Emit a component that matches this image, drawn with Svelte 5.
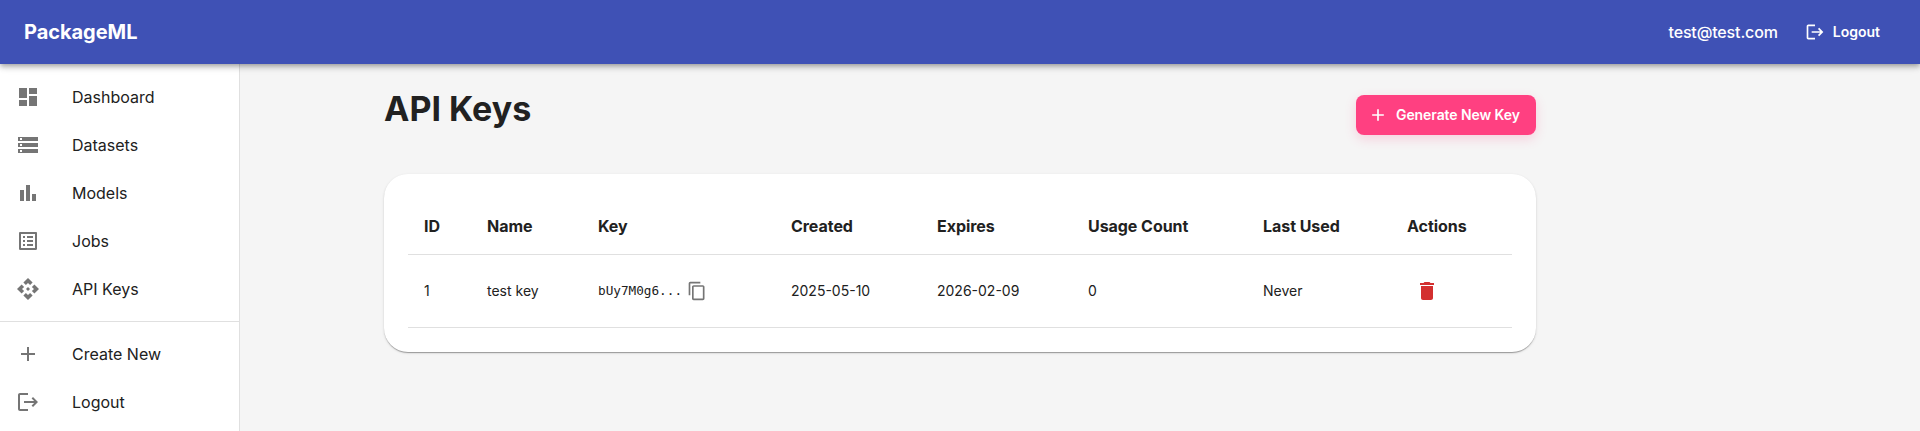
<script>
  const icons = {
    dashboard: 'M3 13h8V3H3zm0 8h8v-6H3zm10 0h8V11h-8zm0-18v6h8V3z',
    storage: 'M2 20h20v-4H2zm2-3h2v2H4zM2 4v4h20V4zm4 3H4V5h2zm-4 7h20v-4H2zm2-3h2v2H4z',
    chart: 'M4 9h4v11H4zm12 4h4v7h-4zm-6-9h4v16h-4z',
    list: 'M19 5v14H5V5zm1.1-2H3.9c-.5 0-.9.4-.9.9v16.2c0 .4.4.9.9.9h16.2c.4 0 .9-.5.9-.9V3.9c0-.5-.5-.9-.9-.9M11 7h6v2h-6zm0 4h6v2h-6zm0 4h6v2h-6zM7 7h2v2H7zm0 4h2v2H7zm0 4h2v2H7z',
    api: 'm14 12-2 2-2-2 2-2zm-2-6 2.12 2.12 2.5-2.5L12 1 7.38 5.62l2.5 2.5zm-6 6 2.12-2.12-2.5-2.5L1 12l4.62 4.62 2.5-2.5zm12 0-2.12 2.12 2.5 2.5L23 12l-4.62-4.62-2.5 2.5zm-6 6-2.12-2.12-2.5 2.5L12 23l4.62-4.62-2.5-2.5z',
    add: 'M19 13h-6v6h-2v-6H5v-2h6V5h2v6h6z',
    logout: 'm17 7-1.41 1.41L18.17 11H8v2h10.17l-2.58 2.58L17 17l5-5zM4 5h8V3H4c-1.1 0-2 .9-2 2v14c0 1.1.9 2 2 2h8v-2H4z',
    copy: 'M16 1H4c-1.1 0-2 .9-2 2v14h2V3h12zm3 4H8c-1.1 0-2 .9-2 2v14c0 1.1.9 2 2 2h11c1.1 0 2-.9 2-2V7c0-1.1-.9-2-2-2m0 16H8V7h11z',
    trash: 'M6 19c0 1.1.9 2 2 2h8c1.1 0 2-.9 2-2V7H6zM19 4h-3.5l-1-1h-5l-1 1H5v2h14z'
  };
  const mainNav = [
    ['Dashboard', 'dashboard'],
    ['Datasets', 'storage'],
    ['Models', 'chart'],
    ['Jobs', 'list'],
    ['API Keys', 'api']
  ];
  const extraNav = [
    ['Create New', 'add'],
    ['Logout', 'logout']
  ];
  const columns = ['ID', 'Name', 'Key', 'Created', 'Expires', 'Usage Count', 'Last Used', 'Actions'];
  const keys = [
    { id: 1, name: 'test key', key: 'bUy7M0g6...', created: '2025-05-10', expires: '2026-02-09', usage: 0, last: 'Never' }
  ];
</script>

{#snippet icon(name, size)}
  <svg class="icon" width={size} height={size} viewBox="0 0 24 24" aria-hidden="true"><path d={icons[name]} /></svg>
{/snippet}

{#snippet nav(items)}
  <ul>
    {#each items as [label, glyph]}
      <li>{@render icon(glyph, 24)}<span>{label}</span></li>
    {/each}
  </ul>
{/snippet}

<div class="app">
  <header>
    <div class="brand">PackageML</div>
    <span class="email">test@test.com</span>
    <button class="logout">{@render icon('logout', 20)}Logout</button>
  </header>
  <div class="body">
    <aside>
      {@render nav(mainNav)}
      <hr />
      {@render nav(extraNav)}
    </aside>
    <main>
      <div class="container">
        <div class="heading">
          <h1>API Keys</h1>
          <button class="generate">{@render icon('add', 20)}Generate New Key</button>
        </div>
        <section class="card">
          <table>
            <colgroup>
              <col class="c-id" /><col class="c-name" /><col class="c-key" /><col class="c-created" />
              <col class="c-expires" /><col class="c-usage" /><col class="c-last" /><col />
            </colgroup>
            <thead>
              <tr>{#each columns as c}<th>{c}</th>{/each}</tr>
            </thead>
            <tbody>
              {#each keys as k}
                <tr>
                  <td>{k.id}</td>
                  <td>{k.name}</td>
                  <td><div class="key"><code>{k.key}</code>{@render icon('copy', 20)}</div></td>
                  <td>{k.created}</td>
                  <td>{k.expires}</td>
                  <td>{k.usage}</td>
                  <td>{k.last}</td>
                  <td class="action"><button class="delete" aria-label="Delete">{@render icon('trash', 24)}</button></td>
                </tr>
              {/each}
            </tbody>
          </table>
        </section>
      </div>
    </main>
  </div>
</div>

<style>
  :global(body) { margin: 0; overflow: hidden; }
  * { box-sizing: border-box; }
  .app {
    height: 431px;
    display: flex;
    flex-direction: column;
    background: #f5f5f5;
    color: #212121;
    font-family: Inter, Roboto, sans-serif;
    font-size: 16px;
  }
  .icon { fill: currentColor; flex: none; display: block; }
  button {
    border: 0;
    background: none;
    font: 600 14px/24px Inter, Roboto, sans-serif;
    color: #fff;
    display: flex;
    align-items: center;
    gap: 8px;
    white-space: nowrap;
  }
  header {
    flex: none;
    height: 64px;
    padding: 0 24px;
    display: flex;
    align-items: center;
    background: #3f51b5;
    color: #fff;
    position: relative;
    z-index: 1;
    box-shadow: 0 2px 4px -1px rgba(0, 0, 0, .2), 0 4px 5px 0 rgba(0, 0, 0, .14), 0 1px 10px 0 rgba(0, 0, 0, .12);
  }
  .brand { flex: 1; font-weight: 700; font-size: 20px; letter-spacing: -.04px; }
  .email { line-height: 24px; font-weight: 500; letter-spacing: -.15px; }
  .logout { padding: 6px 16px 6px 12px; margin-left: 15px; }
  .body { flex: 1; min-height: 0; display: flex; }
  aside { flex: none; width: 240px; background: #fff; border-right: 1px solid #e0e0e0; overflow: hidden; }
  ul { list-style: none; margin: 0; padding: 9px 0 8px; }
  hr + ul { padding-top: 8px; }
  li { height: 48px; padding: 0 16px; display: flex; align-items: center; gap: 32px; }
  li .icon { fill: #757575; }
  hr { margin: 0; border: 0; height: 1px; background: #e0e0e0; }
  main { flex: 1; padding: 24px 0 0; }
  .container { width: 1152px; margin-left: 144px; }
  .heading { height: 86px; display: flex; justify-content: space-between; align-items: flex-start; }
  h1 { margin: 0; font-size: 34px; line-height: 42px; font-weight: 700; }
  .generate {
    width: 180px;
    margin-top: 7px;
    height: 40px;
    padding: 0 0 0 12px;
    border-radius: 8px;
    letter-spacing: -.08px;
    background: #ff4081;
    box-shadow: 0 4px 12px rgba(255, 64, 129, .2);
  }
  .card {
    padding: 24px;
    border-radius: 24px;
    background: #fff;
    box-shadow: 0 2px 1px -1px rgba(0, 0, 0, .2), 0 1px 1px 0 rgba(0, 0, 0, .14), 0 1px 3px 0 rgba(0, 0, 0, .12);
  }
  table { width: 1104px; table-layout: fixed; border-collapse: separate; border-spacing: 0; }
  .c-id { width: 63px; }
  .c-name { width: 111px; }
  .c-key { width: 193px; }
  .c-created { width: 146px; }
  .c-expires { width: 151px; }
  .c-usage { width: 175px; }
  .c-last { width: 144px; }
  th, td { padding: 0 16px; text-align: left; border-bottom: 1px solid #e0e0e0; white-space: nowrap; }
  th { height: 57px; font-weight: 700; font-size: 16px; letter-spacing: -.05px; }
  td { height: 73px; padding-bottom: 1px; font-size: 14px; }
  td.action { padding-bottom: 0; }
  .key { display: flex; align-items: center; gap: 5px; }
  .key .icon { fill: #757575; }
  code { font: 12.7px/20px "DejaVu Sans Mono", monospace; }
  .delete { padding: 8px; color: #d32f2f; }
</style>
